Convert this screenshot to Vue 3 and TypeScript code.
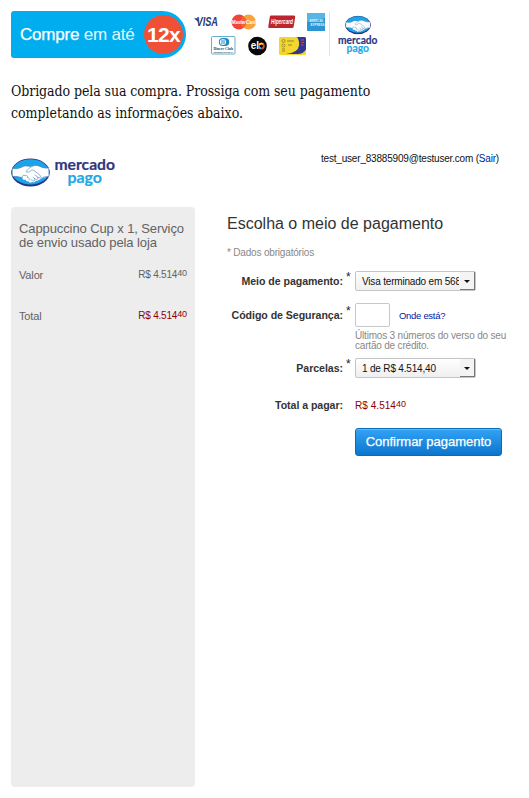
<script setup lang="ts">
import { ref } from 'vue'

interface Money {
  whole: string
  cents: string
}

const total: Money = { whole: 'R$ 4.514', cents: '40' }
const securityCode = ref('')
const user = 'test_user_83885909@testuser.com'
</script>

<template>
  <div class="page">
    <svg class="defs" width="0" height="0" aria-hidden="true">
      <symbol id="handshake" viewBox="0 0 38 28">
        <ellipse cx="19" cy="14" rx="18.8" ry="13.6" fill="#283583" />
        <ellipse cx="19" cy="13.4" rx="17.8" ry="12.2" fill="#1ba5e8" />
        <path d="M1.5 10C6 11 9 9.8 12.4 8c3-.9 5 .4 7 .1 3-1.100 5.700-1.600 8.600 0 3 1.300 5.500 2.100 8.500 1.400l.3 8.400c-3 .3-5.400 1.200-8 2.400-1.800 1.200-3.200 1.800-4.500 2-1.500 1.500-2.600 1.500-3.700 1-1.600 1-3 .5-3.700-.8-1.600.3-2.500-.6-2.700-1.500-2.700.2-3.300-1-3-2-2.600-.7-5.700-1.500-9.700-1.300Z" fill="#fff" />
        <path d="M1.500 9.800C6 11 9 9.600 12.400 7.900c2.600-.7 4.400.2 6.500.2M36.500 9.400c-3 .8-5.700-.2-8.500-1.400-3.500-2-7-.2-9.500 1.200l-4 3.700c1.400 1.400 3.600.7 5.300-1 1.300-.7 2.500 0 3.600 1l5.100 4c1 1.200-.5 2.900-2.100 1.900l-3-2.300m2.500 2.200c1.200 1.400-.8 3-2.200 1.700l-2.100-1.600m1.600 1.500c1 1.700-1.400 2.600-2.400 1.500l-1.400-1M1.500 17.800c4-.3 7 .7 9.500 1.300-.5-1.800 1.300-3 2.800-2 1.800-.6 2.700.6 2.300 1.900 1.600 0 2.100 1.200 1.600 2.300M29 19.500c2.500-1 5-1.700 7.600-1.700" fill="none" stroke="#4a7fb8" stroke-width=".6" stroke-linecap="round" />
      </symbol>
    </svg>

    <header class="banner">
      <div class="offer">
        <span class="offer-text"><b>Compre</b> em até</span>
        <span class="offer-count">12x</span>
      </div>

      <div class="cards">
        <div class="card-row first">
          <svg width="26" height="12" viewBox="0 0 26 12" aria-label="Visa">
            <text x="2.500" y="10.300" class="visa" textLength="21.500" lengthAdjust="spacingAndGlyphs">VISA</text>
            <path d="M0 2.200h3.500l1.600 4.600Z" fill="#273775" />
          </svg>
          <svg width="26" height="16" viewBox="0 0 26 16" aria-label="MasterCard">
            <circle cx="8" cy="8" r="7.500" fill="#ef4638" />
            <circle cx="17.500" cy="8" r="7.500" fill="#faa23b" />
            <path d="M12.800 2.200a7.500 7.500 0 0 1 0 11.600 7.500 7.500 0 0 1 0-11.600" fill="#f06436" />
            <text x=".8" y="10.200" class="master" textLength="24.200" lengthAdjust="spacingAndGlyphs">MasterCard</text>
          </svg>
          <svg width="28" height="14" viewBox="0 0 28 14" aria-label="Hipercard">
            <path d="M3 .5h23q1.500 0 1.200 1.500l-1.500 9.500q-.2 1.500-1.700 1.500H1.200Q0 13 .3 11.500l1.500-9.700Q2 .5 3 .5Z" fill="#bd2630" />
            <text x="3" y="9" class="hiper" textLength="22" lengthAdjust="spacingAndGlyphs">Hipercard</text>
          </svg>
          <svg width="18" height="18" viewBox="0 0 18 18" aria-label="American Express">
            <rect width="18" height="18" fill="#2b96d2" />
            <path d="M0 0h18v5L0 9Z" fill="#57b6e3" />
            <text x="2.500" y="8.500" class="amex" textLength="13.500" lengthAdjust="spacingAndGlyphs">AMERICAN</text>
            <text x="3.500" y="12.500" class="amex" textLength="14" lengthAdjust="spacingAndGlyphs">EXPRESS</text>
          </svg>
        </div>
        <div class="card-row second">
          <svg width="25" height="19" viewBox="0 0 25 19" aria-label="Diners Club">
            <rect x=".5" y=".5" width="23.500" height="17.500" rx="1" fill="#fff" stroke="#67acd1" />
            <rect x="7.800" y="2" width="10.500" height="8" rx="4" fill="#2688bf" />
            <circle cx="12" cy="6" r="3.100" fill="#fff" />
            <path d="M11 3.600v4.800M13 3.600v4.800" stroke="#2688bf" />
            <text x="2.500" y="13.900" class="diners" textLength="19.500" lengthAdjust="spacingAndGlyphs">Diners Club</text>
            <text x="2.500" y="16.500" class="diners-sub" textLength="19.500" lengthAdjust="spacingAndGlyphs">INTERNATIONAL</text>
          </svg>
          <svg width="19" height="20" viewBox="0 0 19 20" aria-label="Elo">
            <circle cx="9.500" cy="10" r="9.300" fill="#080808" />
            <text x="2.800" y="12.700" class="elo">el</text>
            <circle cx="13.400" cy="10" r="2.500" fill="none" stroke="#ed4931" stroke-width="1.700" />
            <path d="M11.200 8.900a2.500 2.500 0 0 1 3.900-.7" fill="none" stroke="#ffd839" stroke-width="1.700" />
            <path d="M10.900 10a2.500 2.500 0 0 0 2 2.500" fill="none" stroke="#3cade0" stroke-width="1.700" />
          </svg>
          <svg width="28" height="20" viewBox="0 0 28 20" aria-label="Cartão">
            <rect y="1" width="27" height="18" rx="1.500" fill="#f4d72d" />
            <path d="M18 1h7.500Q27 1 27 2.500v11q-3 4.500-8.500 4.500H7q12-1 13-8.500Q20.500 4.500 18 1Z" fill="#31378d" />
            <circle cx="4.500" cy="5" r="1.500" fill="none" stroke="#8f872e" stroke-width=".8" />
            <circle cx="4.500" cy="9.500" r="1.500" fill="none" stroke="#8f872e" stroke-width=".8" />
            <path d="M8 5h7M3 13h3M3 15h3M9 9h4" stroke="#8f872e" stroke-width="1.100" />
            <path d="M22 4h3M22.500 6.500h2.300M22 9h2.500" stroke="#d9496b" stroke-width="1" />
          </svg>
        </div>
      </div>

      <svg class="small-brand" width="42" height="41" viewBox="0 0 42 41" role="img" aria-label="mercado pago">
        <use href="#handshake" x="8" y="1.500" width="26" height="19" />
        <text x="1" y="29.700" class="brand small" fill="#29357f" stroke="#29357f" textLength="39.500" lengthAdjust="spacingAndGlyphs">mercado</text>
        <text x="9.500" y="38" class="brand small" fill="#22a8e6" stroke="#22a8e6" textLength="22.500" lengthAdjust="spacingAndGlyphs">pago</text>
      </svg>
    </header>

    <p class="intro">
      <span class="intro-first">Obrigado pela sua compra. Prossiga com seu pagamento</span><br>
      <span class="intro-second">completando as informações abaixo.</span>
    </p>

    <div class="account">
      <svg width="106" height="34" viewBox="0 0 106 34" role="img" aria-label="mercado pago">
        <use href="#handshake" x="0" y="3" width="39" height="29" />
        <text x="43.500" y="14.800" class="brand" fill="#303780" stroke="#303780" textLength="60.500" lengthAdjust="spacingAndGlyphs">mercado</text>
        <text x="56.500" y="27.800" class="brand" fill="#1fa8e5" stroke="#1fa8e5" textLength="34.500" lengthAdjust="spacingAndGlyphs">pago</text>
      </svg>
      <div class="session">{{ user }} (<a href="#">Sair</a>)</div>
    </div>

    <main class="checkout">
      <aside class="summary">
        <h2>Cappuccino Cup x 1, Serviço<br>de envio usado pela loja</h2>
        <div class="line">
          <span>Valor</span>
          <span class="money">{{ total.whole }}<sup>{{ total.cents }}</sup></span>
        </div>
        <div class="line total">
          <span>Total</span>
          <span class="money red">{{ total.whole }}<sup>{{ total.cents }}</sup></span>
        </div>
      </aside>

      <section class="payment">
        <h1>Escolha o meio de pagamento</h1>
        <p class="required">* Dados obrigatórios</p>
        <form class="form" @submit.prevent>
          <div class="field method">
            <span class="label">Meio de pagamento:</span><span class="star">*</span>
            <button type="button" class="select"><span>Visa terminado em 568</span><i></i></button>
          </div>
          <div class="field code">
            <label class="label" for="code">Código de Segurança:</label><span class="star">*</span>
            <div class="code-area">
              <div class="code-row"><input id="code" v-model="securityCode" maxlength="3"><a href="#">Onde está?</a></div>
              <p class="hint">Últimos 3 números do verso do seu<br>cartão de crédito.</p>
            </div>
          </div>
          <div class="field installments">
            <span class="label">Parcelas:</span><span class="star">*</span>
            <button type="button" class="select"><span>1 de R$ 4.514,40</span><i></i></button>
          </div>
          <div class="field pay">
            <span class="label">Total a pagar:</span><span></span>
            <span class="money red">{{ total.whole }}<sup>{{ total.cents }}</sup></span>
          </div>
          <button type="submit" class="confirm">Confirmar pagamento</button>
        </form>
      </section>
    </main>
  </div>
</template>

<style>
body { background: #fff; }
</style>

<style scoped>
* { box-sizing: border-box; }
.page { width: 529px; height: 798px; overflow: hidden; padding: 11px; background: #fff; font-family: "Liberation Sans", Arial, sans-serif; color: #333; }
.defs { display: block; }
svg { display: block; flex: none; overflow: visible; }
h1, h2, p { margin: 0; font-weight: 400; }
a { color: #0021a8; text-decoration: none; }
button, input { font-family: inherit; }

.banner { display: flex; height: 48px; }
.offer { display: flex; align-items: center; justify-content: space-between; width: 175px; height: 47px; padding: 0 3px 0 9px; background: #00aeef; color: #fff; border-radius: 3px 24px 24px 3px; }
.offer-text { font-size: 17px; letter-spacing: -.2px; white-space: nowrap; color: #e4f8ff; }
.offer-text b { font-weight: 400; color: #fff; -webkit-text-stroke: .25px #fff; }
.offer-count { display: flex; align-items: center; justify-content: center; width: 39px; height: 39px; border-radius: 50%; background: #f05136; font-size: 21px; font-weight: 700; letter-spacing: -.6px; }
.cards { width: 144px; padding-left: 8px; border-right: 1px solid #e2e2e2; height: 45px; }
.card-row { display: flex; align-items: center; }
.first { height: 21px; gap: 11px; }
.second { height: 26px; gap: 12px; padding: 1px 0 0 17px; }
.small-brand { margin: 3px 0 0 7px; }
.visa { font: italic 700 12px "Liberation Sans", sans-serif; fill: #273775; }
.master { font: italic 700 5.5px "Liberation Sans", sans-serif; fill: #fff; }
.hiper { font: italic 700 6.5px "Liberation Sans", sans-serif; fill: #fff; }
.amex { font: 700 4px "Liberation Sans", sans-serif; fill: #e0f3fb; }
.diners { font: 700 4.5px "Liberation Serif", serif; fill: #264759; }
.diners-sub { font: 700 2.5px "Liberation Sans", sans-serif; fill: #264759; }
.elo { font: 700 10px "Liberation Sans", sans-serif; fill: #fff; }
.brand { font: 700 16px "Lato", sans-serif; stroke-width: .2px; }
.brand.small { font-size: 10.5px; stroke-width: .15px; }

.intro { height: 66px; padding-top: 21px; font: 14px/22px "DejaVu Serif Condensed", "DejaVu Serif", serif; font-stretch: condensed; color: #111; white-space: nowrap; }
.intro-first { letter-spacing: -.08px; }
.intro-second { letter-spacing: -.01px; }

.account { display: flex; justify-content: space-between; height: 52px; margin-top: 30px; padding-right: 19px; }
.session { margin-top: -2px; font-size: 10px; line-height: 11px; letter-spacing: -.19px; color: #111; white-space: nowrap; }

.checkout { display: flex; gap: 32px; }
.summary { width: 184px; height: 580px; padding: 15px 8px; background: #ededed; border-radius: 4px; color: #626262; }
.summary h2 { font-size: 13px; line-height: 14px; letter-spacing: -.1px; white-space: nowrap; }
.line { display: flex; justify-content: space-between; height: 14px; margin-top: 18px; font-size: 11px; line-height: 14px; letter-spacing: -.15px; }
.line.total { margin-top: 27px; }
.line .money { letter-spacing: -.2px; }
.money { font-size: 10px; line-height: 14px; }
.money sup { font-size: 9px; line-height: 0; vertical-align: 2px; letter-spacing: -.1px; }
.red { color: #900000; }

.payment { width: 290px; }
h1 { height: 32px; padding-top: 7px; font-size: 16px; line-height: 19px; }
.required { margin-top: 8px; font-size: 10px; line-height: 12px; letter-spacing: -.18px; color: #888; }
.form { display: flex; flex-direction: column; }
.field { display: grid; grid-template-columns: 116px 12px 162px; align-items: start; }
.label { text-align: right; font-size: 10.6px; line-height: 14px; font-weight: 700; letter-spacing: -.05px; white-space: nowrap; }
.star { padding-left: 3px; font-size: 12px; line-height: 12px; color: #222; }
.method { margin-top: 12px; height: 32px; }
.method .label, .installments .label { padding-top: 3px; }
.select { display: flex; width: 121px; height: 20px; padding: 0; background: linear-gradient(#fff, #efefef); border: 1px solid #c5c5c5; border-radius: 2px; color: #111; font-size: 10px; letter-spacing: -.18px; text-align: left; }
.select span { width: 97px; height: 18px; margin-left: 6px; line-height: 19px; overflow: hidden; white-space: nowrap; }
.select i { display: flex; justify-content: center; width: 15px; height: 18px; margin-left: auto; border-right: 1px solid #777; border-bottom: 1px solid #777; background: #f4f4f4; }
.select i::before { content: ""; margin-top: 8px; width: 0; height: 0; border: 3px solid transparent; border-top-color: #111; border-bottom: 0; }
.code { height: 55px; }
.code .label { padding-top: 5px; }
.code .star { padding-top: 2px; }
.code-row { display: flex; align-items: center; gap: 9px; height: 24px; font-size: 9.5px; letter-spacing: -.3px; }
.code-row input { width: 35px; height: 24px; padding: 2px 4px; border: 1px solid #c8c8c8; border-radius: 2px; background: #fff; outline: 0; }
.hint { margin-top: 4px; font-size: 10px; line-height: 10px; letter-spacing: -.19px; color: #888; white-space: nowrap; }
.installments { height: 40px; }
.pay { height: 30px; }
.pay .money { padding-top: 1px; letter-spacing: .05px; }
.confirm { align-self: flex-start; width: 147px; height: 28px; margin-left: 128px; padding: 0; color: #fff; font-size: 13px; line-height: 26px; background: linear-gradient(#33a2f5, #0c76cc); border: 1px solid #096bb8; border-radius: 3px; box-shadow: inset 0 1px #61bdf8; white-space: nowrap; -webkit-text-stroke: .25px #fff; }
</style>
